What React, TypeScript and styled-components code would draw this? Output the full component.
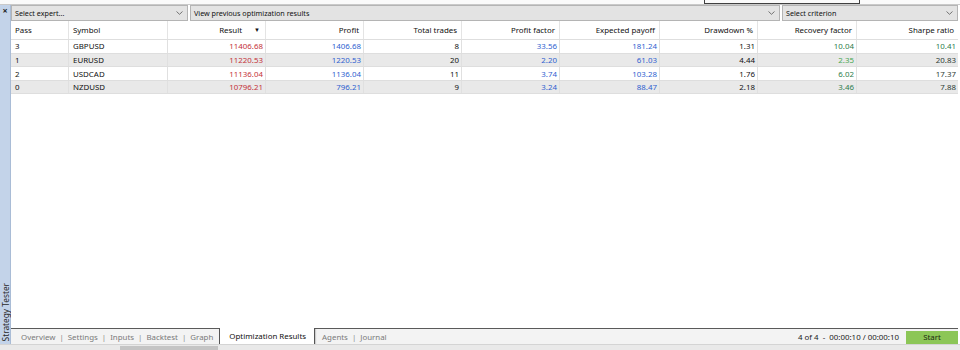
import React from 'react';
import styled, {createGlobalStyle} from 'styled-components';

const GlobalStyle = createGlobalStyle`
  html, body {
    margin: 0;
    padding: 0;
    background: #ffffff;
  }
  body {
    font-family: "Noto Sans", "Open Sans", sans-serif;
  }
`;

const Window = styled.div`
  width: 960px;
  height: 350px;
  display: flex;
  flex-direction: column;
  overflow: hidden;
  background: #ffffff;
  font-size: 7.9px;
  color: #111;
`;

const TopStrip = styled.div`
  height: 4px;
  flex: none;
  display: flex;
  justify-content: flex-end;
  border-bottom: 1px solid #c9c9c9;
  background: #fafafa;
`;

const CutBox = styled.div`
  width: 154px;
  height: 3px;
  margin-right: 100px;
  border: 1px solid #404040;
  border-top: none;
`;

const Body = styled.div`
  flex: 1;
  display: flex;
  min-height: 0;
`;

const Sidebar = styled.div`
  width: 10px;
  flex: none;
  display: flex;
  flex-direction: column;
  justify-content: space-between;
  align-items: center;
  background: #c3d3e9;
  border-right: 1px solid #a9bcd6;
  padding: 1px 0 3px;
`;

const CloseMark = styled.span`
  font-size: 9px;
  line-height: 9px;
  font-weight: bold;
  color: #222;
`;

const SideLabel = styled.span`
  writing-mode: vertical-rl;
  transform: rotate(180deg);
  font-size: 8.3px;
  color: #2a2a2a;
  white-space: nowrap;
`;

const Main = styled.div`
  flex: 1;
  display: flex;
  flex-direction: column;
  min-width: 0;
  padding-right: 2px;
`;

const Toolbar = styled.div`
  display: flex;
  gap: 2px;
  height: 16px;
  flex: none;
`;

const Combo = styled.div<{$w?: number}>`
  ${p => (p.$w ? `width: ${p.$w}px; flex: none;` : 'flex: 1;')}
  display: flex;
  align-items: center;
  justify-content: space-between;
  padding: 0 4px 0 3px;
  background: #e3e3e3;
  border: 1px solid #b4b4b4;
  box-sizing: border-box;
  font-size: 7.2px;
  color: #111;
`;

const Chevron = () => (
  <svg width="7" height="4" viewBox="0 0 7 4">
    <path d="M0.5 0.5 L3.5 3.3 L6.5 0.5" fill="none" stroke="#666" strokeWidth="0.9" />
  </svg>
);

const COLS = '58px 99px 98px 98px 98px 98px 100px 98px 99px 101px';

const Grid = styled.div`
  display: grid;
  grid-template-columns: ${COLS};
`;

const HeadRow = styled(Grid)`
  height: 18px;
`;

const HeadCell = styled.div<{$left?: boolean}>`
  display: flex;
  align-items: center;
  justify-content: ${p => (p.$left ? 'flex-start' : 'flex-end')};
  padding: 0 4px;
  border-right: 1px solid #e4e4e4;
  color: #111;
  &:last-child { border-right: none; }
`;

const SortArrow = styled.span`
  font-size: 6px;
  margin-left: 12px;
  margin-right: 1px;
`;

const Row = styled(Grid)<{$alt: boolean}>`
  height: 13.7px;
  background: ${p => (p.$alt ? '#e9e9e9' : '#ffffff')};
  border-top: 1px solid #dedede;
  box-sizing: border-box;
  &:last-child { border-bottom: 1px solid #dedede; }
`;

const Cell = styled.div<{$left?: boolean; $c?: string}>`
  display: flex;
  align-items: center;
  justify-content: ${p => (p.$left ? 'flex-start' : 'flex-end')};
  padding: 0 2px 0 4px;
  color: ${p => p.$c || '#111'};
  border-right: 1px solid #e0e0e0;
  white-space: nowrap;
  &:last-child { border-right: none; }
`;

const Spacer = styled.div`
  flex: 1;
`;

const TabBar = styled.div`
  height: 15px;
  flex: none;
  display: flex;
  align-items: stretch;
  border-top: 1px solid #5a5a5a;
  background: #f3f3f3;
`;

const Tabs = styled.div`
  display: flex;
  align-items: stretch;
  padding-left: 6px;
`;

const Tab = styled.div<{$active?: boolean}>`
  display: flex;
  align-items: center;
  padding: ${p => (p.$active ? '0 8px 0 9px' : '0 3px')};
  margin: ${p => (p.$active ? '-1px 3px 0 2px' : '0')};
  color: ${p => (p.$active ? '#111' : '#7a7a7a')};
  background: ${p => (p.$active ? '#ffffff' : 'transparent')};
  border-left: 1px solid ${p => (p.$active ? '#555' : 'transparent')};
  border-right: 1px solid ${p => (p.$active ? '#555' : 'transparent')};
  box-shadow: ${p => (p.$active ? '1px 1px 1px rgba(0,0,0,0.15)' : 'none')};
`;

const Sep = styled.span`
  display: flex;
  align-items: center;
  color: #8a8a8a;
`;

const Status = styled.div`
  margin-left: auto;
  display: flex;
  align-items: center;
  gap: 7px;
  color: #222;
`;

const StartButton = styled.div`
  width: 52px;
  height: 13px;
  margin-top: 1px;
  display: flex;
  align-items: center;
  justify-content: center;
  background: #8cc657;
  color: #1d2a12;
`;

const BottomStrip = styled.div`
  height: 5px;
  flex: none;
  display: flex;
  background: #e9e9e9;
  border-top: 1px solid #d4d4d4;
`;

const Thumb = styled.div`
  width: 98px;
  height: 4px;
  margin-left: 120px;
  margin-top: 1px;
  background: #c4c4c4;
`;

type Num = {v: string; c: string};

const RED = '#c4323a';
const BLUE = '#2f5fd0';
const BLACK = '#111111';
const GREEN = '#2e7d4c';
const LGREEN = '#46a651';
const DARK = '#2d3b35';

const rows: {pass: string; sym: string; cells: Num[]}[] = [
  {
    pass: '3', sym: 'GBPUSD', cells: [
      {v: '11406.68', c: RED}, {v: '1406.68', c: BLUE}, {v: '8', c: BLACK}, {v: '33.56', c: BLUE},
      {v: '181.24', c: BLUE}, {v: '1.31', c: BLACK}, {v: '10.04', c: GREEN}, {v: '10.41', c: GREEN},
    ],
  },
  {
    pass: '1', sym: 'EURUSD', cells: [
      {v: '11220.53', c: RED}, {v: '1220.53', c: BLUE}, {v: '20', c: BLACK}, {v: '2.20', c: BLUE},
      {v: '61.03', c: BLUE}, {v: '4.44', c: BLACK}, {v: '2.35', c: LGREEN}, {v: '20.83', c: DARK},
    ],
  },
  {
    pass: '2', sym: 'USDCAD', cells: [
      {v: '11136.04', c: RED}, {v: '1136.04', c: BLUE}, {v: '11', c: BLACK}, {v: '3.74', c: BLUE},
      {v: '103.28', c: BLUE}, {v: '1.76', c: BLACK}, {v: '6.02', c: GREEN}, {v: '17.37', c: DARK},
    ],
  },
  {
    pass: '0', sym: 'NZDUSD', cells: [
      {v: '10796.21', c: RED}, {v: '796.21', c: BLUE}, {v: '9', c: BLACK}, {v: '3.24', c: BLUE},
      {v: '88.47', c: BLUE}, {v: '2.18', c: BLACK}, {v: '3.46', c: GREEN}, {v: '7.88', c: DARK},
    ],
  },
];

const headers = ['Profit', 'Total trades', 'Profit factor', 'Expected payoff', 'Drawdown %', 'Recovery factor', 'Sharpe ratio'];

const tabs = ['Overview', 'Settings', 'Inputs', 'Backtest', 'Graph'];

export default function App() {
  return (
    <>
      <GlobalStyle />
      <Window>
        <TopStrip>
          <CutBox />
        </TopStrip>
        <Body>
          <Sidebar>
            <CloseMark>×</CloseMark>
            <SideLabel>Strategy Tester</SideLabel>
          </Sidebar>
          <Main>
            <Toolbar>
              <Combo $w={177}>Select expert...<Chevron /></Combo>
              <Combo>View previous optimization results<Chevron /></Combo>
              <Combo $w={176}>Select criterion<Chevron /></Combo>
            </Toolbar>
            <HeadRow>
              <HeadCell $left>Pass</HeadCell>
              <HeadCell $left>Symbol</HeadCell>
              <HeadCell>Result<SortArrow>▼</SortArrow></HeadCell>
              {headers.map(h => <HeadCell key={h}>{h}</HeadCell>)}
            </HeadRow>
            <div>
              {rows.map((r, i) => (
                <Row key={r.pass} $alt={i % 2 === 1}>
                  <Cell $left>{r.pass}</Cell>
                  <Cell $left>{r.sym}</Cell>
                  {r.cells.map((n, j) => <Cell key={j} $c={n.c}>{n.v}</Cell>)}
                </Row>
              ))}
            </div>
            <Spacer />
            <TabBar>
              <Tabs>
                {tabs.map((t, i) => (
                  <React.Fragment key={t}>
                    {i > 0 && <Sep>|</Sep>}
                    <Tab>{t}</Tab>
                  </React.Fragment>
                ))}
                <Tab $active>Optimization Results</Tab>
                <Tab>Agents</Tab>
                <Sep>|</Sep>
                <Tab>Journal</Tab>
              </Tabs>
              <Status>
                <span>4 of 4&nbsp;&nbsp;-&nbsp;&nbsp;00:00:10 / 00:00:10</span>
                <StartButton>Start</StartButton>
              </Status>
            </TabBar>
          </Main>
        </Body>
        <BottomStrip>
          <Thumb />
        </BottomStrip>
      </Window>
    </>
  );
}
